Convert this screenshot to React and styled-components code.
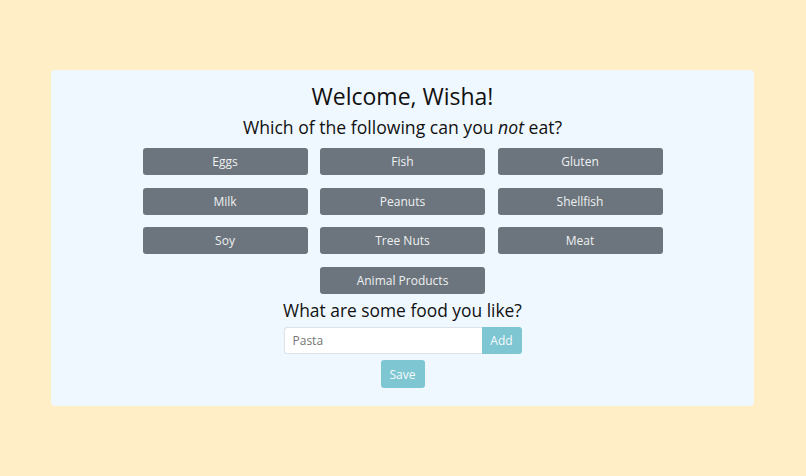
import React, { useState } from "react";
import styled, { createGlobalStyle } from "styled-components";

const GlobalStyle = createGlobalStyle`
  html, body {
    margin: 0;
    padding: 0;
    background: #ffeec6;
    font-family: "Open Sans", "Noto Sans", sans-serif;
  }
`;

const restrictions = [
  "Eggs",
  "Fish",
  "Gluten",
  "Milk",
  "Peanuts",
  "Shellfish",
  "Soy",
  "Tree Nuts",
  "Meat",
  "Animal Products",
];

const App = () => {
  const [food, setFood] = useState("");

  return (
    <Page>
      <GlobalStyle />
      <Card>
        <Title>Welcome, Wisha!</Title>
        <Question>
          Which of the following can you <em>not</em> eat?
        </Question>

        <OptionGrid>
          {restrictions.map((item) => (
            <OptionButton key={item}>{item}</OptionButton>
          ))}
        </OptionGrid>

        <Question $top={4} $size={17.4}>
          What are some food you like?
        </Question>

        <InputGroup>
          <FoodInput
            placeholder="Pasta"
            value={food}
            onChange={(e) => setFood(e.target.value)}
          />
          <AddButton>Add</AddButton>
        </InputGroup>

        <SaveButton>Save</SaveButton>
      </Card>
    </Page>
  );
};

export default App;

const Page = styled.div`
  min-height: 100vh;
  box-sizing: border-box;
  padding: 70px 0 70px 51px;
  display: flex;
  align-items: flex-start;
`;

const Card = styled.div`
  width: 703px;
  box-sizing: border-box;
  padding: 11px 0 18px;
  display: flex;
  flex-direction: column;
  align-items: center;
  border-radius: 4px;
  background: #f0f8ff;
  color: #111111;
`;

const Title = styled.h1`
  margin: 0;
  font-size: 23px;
  font-weight: 400;
  line-height: 30px;
`;

const Question = styled.h2`
  margin: ${(p) => p.$top ?? 4}px 0 0;
  font-size: ${(p) => p.$size ?? 17.6}px;
  font-weight: 400;
  line-height: 24px;
`;

const OptionGrid = styled.div`
  display: grid;
  grid-template-columns: repeat(3, 1fr);
  width: 520px;
  column-gap: 12.5px;
  row-gap: 12.7px;
  margin-top: 9px;

  & > :last-child {
    grid-column: 2;
  }
`;

const OptionButton = styled.button`
  height: 27px;
  padding: 0;
  font-family: inherit;
  font-size: 12px;
  color: #eef0f2;
  border: none;
  border-radius: 3px;
  background: #6c757d;
  cursor: pointer;
`;

const InputGroup = styled.div`
  display: flex;
  width: 238px;
  height: 27px;
  margin: 5px 0 6px;
`;

const FoodInput = styled.input`
  flex: 1;
  min-width: 0;
  box-sizing: border-box;
  padding: 0 8px;
  font-family: inherit;
  font-size: 12px;
  color: #333333;
  border: 1px solid #dde3e8;
  border-right: none;
  border-radius: 3px 0 0 3px;
  background: #ffffff;
  outline: none;

  ::placeholder {
    color: #868b90;
  }
`;

const AddButton = styled.button`
  width: 40px;
  padding: 0;
  font-family: inherit;
  font-size: 12px;
  color: #f4fbfc;
  border: none;
  border-radius: 0 3px 3px 0;
  background: #7fc6d3;
  cursor: pointer;
`;

const SaveButton = styled.button`
  width: 44px;
  height: 28px;
  padding: 0;
  font-family: inherit;
  font-size: 12px;
  color: #f4fbfc;
  border: none;
  border-radius: 3px;
  background: #7fc6d3;
  cursor: pointer;
`;
